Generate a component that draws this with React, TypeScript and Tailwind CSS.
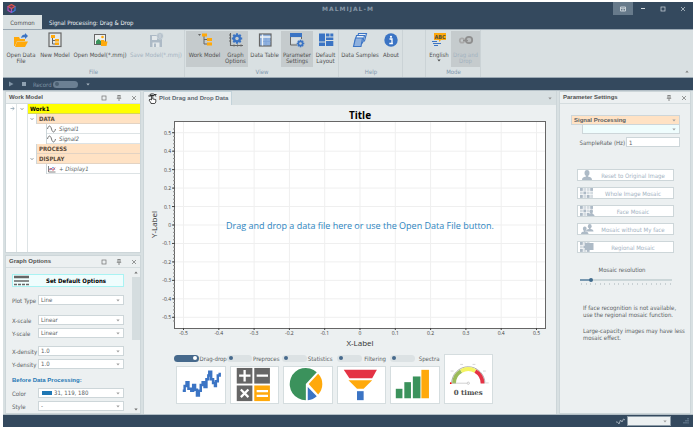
import { useState, type ReactNode } from 'react'
import clsx from 'clsx'

const BLUE = '#3b74c4'
const ORANGE = '#ffa90b'
const GRAY = '#666666'
const GREEN = '#3b925c'
const RED = '#e43345'
const MUTED = '#adbac6'

/* ---------- ribbon icons ---------- */

const OpenFileIcon = () => (
  <svg viewBox="0 0 16 16" className="size-4">
    <path d="M1 5h5l1 2h5v2H4l-2 5H1z" fill={ORANGE} />
    <path d="M4 9.500h11l-3 5.500H2z" fill={ORANGE} />
    <path d="M8 6c.5-2.500 2-3.500 4-3.500V1l3 3-3 3V5.200C10.300 5 9.200 5.300 8 6z" fill={BLUE} />
  </svg>
)

const NewModelIcon = () => (
  <svg viewBox="0 0 16 16" className="size-4">
    <rect x="2" y="1" width="12" height="13.500" fill="#e4e8e9" stroke={GRAY} strokeWidth="1.200" />
    <path d="M5.500 5v7H9M5.500 8.500H9" fill="none" stroke={GRAY} />
    <rect x="4" y="3" width="4" height="3" fill={ORANGE} />
    <rect x="8" y="7" width="4" height="2.500" fill={ORANGE} />
    <rect x="8" y="10.500" width="4" height="2.500" fill={ORANGE} />
  </svg>
)

const OpenModelIcon = () => (
  <svg viewBox="0 0 16 16" className="size-4">
    <rect x="2.500" y="2.500" width="11" height="10" fill="#eef1f1" stroke={GRAY} />
    <path d="M4 12V9l2.500-2L9 9v3z" fill={GREEN} />
    <circle cx="10.500" cy="5" r="1.300" fill={ORANGE} />
    <path d="M9 8h3l1 1.500h2.500L14.500 14H9z" fill={ORANGE} />
  </svg>
)

const SaveModelIcon = () => (
  <svg viewBox="0 0 16 16" className="size-4">
    <path d="M2 3h7v3h5v9H2z" fill={MUTED} />
    <rect x="4" y="4" width="5" height="4" fill="#e3e8ea" />
    <rect x="4.500" y="10.500" width="7" height="4.500" fill="#e3e8ea" />
    <rect x="6" y="11.500" width="2" height="3.500" fill={MUTED} />
    <circle cx="12" cy="4" r="3.200" fill={MUTED} stroke="#d9e0e2" strokeWidth=".6" />
    <path d="M10.500 3h3M10.500 5h3" stroke="#e3e8ea" strokeWidth=".8" />
  </svg>
)

const WorkModelIcon = () => (
  <svg viewBox="0 0 16 16" className="size-4">
    <path d="M1 2h3L2.500 4z" fill={GRAY} />
    <path d="M7 4v8h4M7 7.500h4" fill="none" stroke={GRAY} />
    <rect x="5" y="1.500" width="5" height="3" fill={ORANGE} />
    <rect x="10" y="6" width="5" height="3" fill={ORANGE} />
    <rect x="10" y="10.500" width="5" height="3" fill={ORANGE} />
  </svg>
)

const Gear = ({ cx, cy, r, hole }: { cx: number; cy: number; r: number; hole: string }) => (
  <g transform={`translate(${cx} ${cy})`}>
    <circle r={r * 0.78} fill={BLUE} />
    {[0, 45, 90, 135].map(a => (
      <rect key={a} x={-r * 0.2} y={-r} width={r * 0.4} height={r * 2} fill={BLUE} transform={`rotate(${a})`} />
    ))}
    <circle r={r * 0.33} fill={hole} />
  </g>
)

const GraphOptionsIcon = () => (
  <svg viewBox="0 0 16 16" className="size-4">
    <path d="M2.500 1v12.500H15M1 3h2M1 6h2M1 9h2M6 12.500v2M9.500 12.500v2M13 12.500v2" fill="none" stroke={GRAY} strokeWidth="1.100" />
    <Gear cx={9} cy={6.5} r={5.2} hole="#c6ccce" />
  </svg>
)

const DataTableIcon = () => (
  <svg viewBox="0 0 16 16" className="size-4">
    <rect x="2.500" y="2" width="11.500" height="12" fill="#8fb1de" stroke={GRAY} strokeWidth="1.200" />
    <path d="M3 5h10.500M5.500 2.500v11" stroke="#f0f4f8" strokeWidth="1.300" />
    <path d="M9 6v7.500M6 9.500h7.500" stroke="#7ba2d8" strokeWidth=".7" />
  </svg>
)

const ParameterIcon = () => (
  <svg viewBox="0 0 16 16" className="size-4">
    <rect x="1" y="1" width="12" height="4" fill={BLUE} />
    <path d="M1.500 5v8H8" fill="none" stroke={GRAY} />
    <path d="M12.500 5v2" stroke={GRAY} />
    <rect x="2" y="5.500" width="10" height="6" fill="#d9dfe2" />
    <Gear cx={11.5} cy={11.5} r={3.8} hole="#c6ccce" />
  </svg>
)

const LayoutIcon = () => (
  <svg viewBox="0 0 16 16" className="size-4">
    <g fill={BLUE}>
      <rect x="1" y="1.500" width="6" height="8" />
      <rect x="1" y="10.500" width="6" height="3.500" />
      <rect x="8" y="1.500" width="3.500" height="3" />
      <rect x="12.300" y="1.500" width="3" height="3" />
      <rect x="8" y="5.500" width="7.300" height="2.500" />
      <rect x="8" y="9" width="7.300" height="5" />
    </g>
  </svg>
)

const SamplesIcon = () => (
  <svg viewBox="0 0 16 16" className="size-4">
    <g fill="#e8eef5" stroke={BLUE} strokeWidth="1.100">
      <path d="M6.500 1.500h8l-2 7.500h-8z" />
      <path d="M4.500 3.500h8l-2 7.500h-8z" />
      <path d="M3.500 6h7L9 14.500H1.500z" fill="#8fb1de" />
    </g>
  </svg>
)

const AboutIcon = () => (
  <svg viewBox="0 0 16 16" className="size-4">
    <circle cx="8" cy="8" r="6.700" fill={BLUE} />
    <circle cx="8" cy="4.800" r="1.100" fill="#fff" />
    <path d="M6.500 7H9v4.500M6.300 11.500h3.600" fill="none" stroke="#fff" strokeWidth="1.300" />
  </svg>
)

const LanguageIcon = () => (
  <svg viewBox="0 0 16 16" className="size-4">
    <path d="M3 1h12v7h-5l-2 2V8H3z" fill={ORANGE} />
    <text x="9" y="6.800" textAnchor="middle" fontSize="5.500" fontWeight="700" fill="#56503c">ABC</text>
    <path d="M1 9.500h5M2 11.500h8M3 13.500h4" stroke={BLUE} strokeWidth="1.100" />
  </svg>
)

const DragDropIcon = () => (
  <svg viewBox="0 0 16 16" className="size-4">
    <circle cx="4" cy="8.500" r="2.200" fill="none" stroke="#a9a9a9" strokeWidth="1.800" />
    <circle cx="11" cy="8" r="3.200" fill="#b9bcbd" stroke="#8f8f8f" strokeWidth="1.800" />
    <path d="M5 8.500h5" stroke="#8f8f8f" strokeWidth="1.200" />
  </svg>
)

/* ---------- small shared pieces ---------- */

const Caret = ({ className }: { className?: string }) => (
  <svg viewBox="0 0 4 3" className={clsx('h-[3px] w-1 shrink-0', className)}>
    <path d="M.3.500h3.400L2 2.400z" fill="currentColor" />
  </svg>
)

const PinIcon = () => (
  <svg viewBox="0 0 6 6" className="size-1.5">
    <path d="M1.500.5h3M2 .5V3M4 .5V3M.8 3.300h4.400M3 3.500V6" stroke="currentColor" strokeWidth=".8" fill="none" />
  </svg>
)

const CloseIcon = () => (
  <svg viewBox="0 0 6 6" className="size-1.5">
    <path d="M1 1l4 4M5 1L1 5" stroke="currentColor" strokeWidth=".7" />
  </svg>
)

const SquareIcon = () => (
  <svg viewBox="0 0 6 6" className="size-1.5">
    <rect x="1" y="1" width="4" height="4" fill="none" stroke="currentColor" strokeWidth=".7" />
  </svg>
)

interface RibbonButtonProps {
  icon: ReactNode
  lines: string[]
  active?: boolean
  disabled?: boolean
  caret?: boolean
  className?: string
}

function RibbonButton({ icon, lines, active, disabled, caret, className }: RibbonButtonProps) {
  return (
    <button
      disabled={disabled}
      className={clsx(
        'flex h-9 flex-col items-center whitespace-nowrap pt-px',
        active && 'bg-[#c5cbcd]',
        disabled ? 'text-[#a3b2bf]' : 'text-[#505050]',
        className,
      )}
    >
      {icon}
      <span className="mt-1 flex flex-col items-center leading-[6px]">
        {lines.map(line => <span key={line}>{line}</span>)}
        {caret && <Caret className="mt-px" />}
      </span>
    </button>
  )
}

function RibbonGroup({ label, className, children }: { label?: string; className?: string; children?: ReactNode }) {
  return (
    <div className={clsx('flex flex-col border-r border-[#cbd3d6] pt-px', className)}>
      <div className="flex">{children}</div>
      <div className="flex flex-1 items-start justify-center pt-px text-[#7e97ad]">{label}</div>
    </div>
  )
}

function Panel({ title, maximize, className, children }: { title: string; maximize?: boolean; className?: string; children: ReactNode }) {
  return (
    <section className={clsx('flex flex-col border border-[#cdd6d9] bg-[#ecf0f1]', className)}>
      <header className="flex h-3 shrink-0 items-center border-b border-[#d5dddf] pr-[3px] pl-[3px] text-[#505050]">
        <h2 className="flex-1 font-['Liberation_Sans',sans-serif] font-bold">{title}</h2>
        <div className="flex gap-[9px] text-[#707070]">
          {maximize && <button aria-label={`Maximize ${title}`}><SquareIcon /></button>}
          <button aria-label={`Pin ${title}`}><PinIcon /></button>
          <button aria-label={`Close ${title}`}><CloseIcon /></button>
        </div>
      </header>
      {children}
    </section>
  )
}

interface SelectProps {
  id?: string
  label?: string
  value: string
  swatch?: boolean
  className?: string
}

function Select({ id, label, value, swatch, className }: SelectProps) {
  return (
    <div className={clsx('relative flex h-2.5 items-center border', className ?? 'border-[#cdd6d9] bg-white')}>
      {swatch && <span className="ml-[3px] h-1 w-2.5 shrink-0 bg-[#1f77b4]" />}
      <select id={id} aria-label={label} defaultValue={value} className="h-2 w-full appearance-none bg-transparent pl-0.5 leading-2 outline-none">
        <option>{value}</option>
      </select>
      <Caret className="pointer-events-none absolute right-[3px] text-[#a0a0a0]" />
    </div>
  )
}

function Field({ id, label, value, swatch }: { id: string; label: string; value: string; swatch?: boolean }) {
  return (
    <div className="grid grid-cols-[26px_1fr] items-center">
      <label htmlFor={id} className="whitespace-nowrap">{label}</label>
      <Select id={id} value={value} swatch={swatch} />
    </div>
  )
}

/* ---------- left column ---------- */

const Expander = () => (
  <svg viewBox="0 0 4 4" className="size-1">
    <path d="M.5 1L2 2.800 3.500 1" fill="none" stroke="#8b9499" strokeWidth=".8" />
  </svg>
)

const SineIcon = () => (
  <svg viewBox="0 0 9 8" className="h-2 w-[9px]">
    <path d="M.5 4C1.500 0 3.500 0 4.500 4s3 4 4 0" fill="none" stroke={GRAY} strokeWidth=".9" />
  </svg>
)

const PlotIcon = () => (
  <svg viewBox="0 0 9 8" className="h-2 w-[9px]">
    <path d="M1.500 1v6H8.500" fill="none" stroke={GRAY} strokeWidth=".8" />
    <path d="M2 5.500L4 3l2 2.500L8 2.500" fill="none" stroke={RED} strokeWidth=".8" />
    <path d="M2 3.500L4 5l2-3 2 3" fill="none" stroke={BLUE} strokeWidth=".6" />
  </svg>
)

function TreeSection({ name, open }: { name: string; open?: boolean }) {
  return (
    <li className="flex h-2.5">
      <span className="flex w-[9px] items-center justify-center border-r border-[#cdd6d9]">{open && <Expander />}</span>
      <span className="flex flex-1 items-center border-b border-[#e3d3c3] bg-[#ffe2c4] pl-0.5 font-bold text-[#5a4a3a]">{name}</span>
    </li>
  )
}

function TreeItem({ name, icon }: { name: string; icon: ReactNode }) {
  return (
    <li className="flex h-2.5 pl-[9px]">
      <span className="w-2.5 border-r border-[#cdd6d9]" />
      <span className="flex flex-1 items-center gap-[3px] border-b border-[#dde3e5] italic">{icon}{name}</span>
    </li>
  )
}

function WorkModel() {
  return (
    <Panel title="Work Model" maximize className="h-[162px]">
      <div className="flex flex-1 bg-white">
        <span className="w-[11px] border-r border-[#dde3e5] pt-0.5 pl-1">
          <svg viewBox="0 0 5 5" className="size-[5px]">
            <path d="M.5 2.500h3.500M2.500 1L4.300 2.500 2.500 4" fill="none" stroke="#8fa3b3" strokeWidth=".8" />
          </svg>
        </span>
        <span className="flex w-[11px] justify-center border-r border-[#dde3e5] pt-[3px]"><Expander /></span>
        <div className="flex-1">
          <div className="flex h-2.5 items-center border-b border-[#d6d65a] bg-[#ffff00] pl-0.5 font-bold text-black">Work1</div>
          <ul>
            <TreeSection name="DATA" open />
            <TreeItem name="Signal1" icon={<SineIcon />} />
            <TreeItem name="Signal2" icon={<SineIcon />} />
            <TreeSection name="PROCESS" />
            <TreeSection name="DISPLAY" open />
            <TreeItem name="+ Display1" icon={<PlotIcon />} />
          </ul>
        </div>
      </div>
    </Panel>
  )
}

function GraphOptions() {
  return (
    <Panel title="Graph Options" maximize className="flex-1">
      <div className="flex flex-1">
        <div className="flex flex-1 flex-col px-1.5 pt-1.5">
          <button className="flex h-[13px] items-center border border-[#a9f3f3] bg-[#effdfd] font-bold text-black">
            <svg viewBox="0 0 15 11" className="ml-px h-[11px] w-[15px]">
              <path d="M0 2h15" stroke={GRAY} strokeWidth="2.500" />
              <path d="M0 6h15" stroke={GRAY} strokeWidth="1.500" />
              <path d="M0 9.500h15" stroke={GRAY} strokeWidth="1.500" strokeDasharray="3 1" />
            </svg>
            <span className="flex-1">Set Default Options</span>
          </button>
          <div className="mt-2"><Field id="plot-type" label="Plot Type" value="Line" /></div>
          <div className="mt-2.5 flex flex-col gap-[3px]">
            <Field id="x-scale" label="X-scale" value="Linear" />
            <Field id="y-scale" label="Y-scale" value="Linear" />
          </div>
          <div className="mt-2 flex flex-col gap-[3px]">
            <Field id="x-density" label="X-density" value="1.0" />
            <Field id="y-density" label="Y-density" value="1.0" />
          </div>
          <h3 className="mt-2 font-['Liberation_Sans',sans-serif] font-bold text-[#1f77b4]">Before Data Processing:</h3>
          <div className="mt-1 flex flex-col gap-[3px]">
            <Field id="color" label="Color" value="31, 119, 180" swatch />
            <Field id="style" label="Style" value="-" />
          </div>
        </div>
        <div className="ml-0.5 flex w-2 flex-col items-center text-[#707070]">
          <Caret className="my-[3px] rotate-180" />
          <div className="h-[63px] w-full bg-[#d5dddf]" />
          <Caret className="mt-auto mb-0.5" />
        </div>
      </div>
    </Panel>
  )
}

/* ---------- plot ---------- */

const STEPS = [-5, -4, -3, -2, -1, 0, 1, 2, 3, 4, 5]
const MINOR = Array.from({ length: 53 }, (_, i) => (i - 26) / 5)
const xPos = (n: number) => `${50 + n * 9.54}%`
const yPos = (n: number) => `${50 - n * 8.96}%`
const tickLabel = (n: number) => (n === 0 ? '0' : (n / 10).toFixed(1))

function Plot() {
  return (
    <div className="flex flex-1 flex-col pr-2.5 font-['Open_Sans',sans-serif]">
      <h2 className="mt-1 ml-[30px] text-center text-[10px] leading-3 font-bold text-black">Title</h2>
      <div className="flex flex-1">
        <div className="flex w-[30px] items-center justify-start pl-1.5">
          <span className="rotate-180 text-[8px] leading-2 text-[#303030] [writing-mode:vertical-rl]">Y-Label</span>
        </div>
        <div className="relative min-h-[180px] flex-1 border border-[#666] bg-white">
          <svg className="absolute inset-0 h-full w-full overflow-visible">
            {STEPS.map(n => (
              <g key={n} stroke="#efefef">
                <line x1={xPos(n)} x2={xPos(n)} y1="0" y2="100%" />
                <line x1="0" x2="100%" y1={yPos(n)} y2={yPos(n)} />
              </g>
            ))}
            {MINOR.map(n => <line key={n} x1="-2" x2="0" y1={yPos(n)} y2={yPos(n)} stroke="#888" />)}
            {STEPS.map(n => (
              <g key={n} fill="#404040" fontSize="5">
                <line x1="-3" x2="0" y1={yPos(n)} y2={yPos(n)} stroke="#444" />
                <text x="-4" y={yPos(n)} dy="2" textAnchor="end">{tickLabel(n)}</text>
              </g>
            ))}
            {/* bottom axis hangs under the plot area */}
            <svg y="100%" className="overflow-visible" fill="#404040" fontSize="5">
              {MINOR.map(n => <line key={n} x1={xPos(n)} x2={xPos(n)} y1="0" y2="1" stroke="#666" />)}
              {STEPS.map(n => (
                <g key={n}>
                  <line x1={xPos(n)} x2={xPos(n)} y1="0" y2="2" stroke="#444" />
                  <text x={xPos(n)} y="7" textAnchor="middle">{tickLabel(n)}</text>
                </g>
              ))}
            </svg>
          </svg>
          <p className="relative flex h-full items-center justify-center text-[9px] text-[#2e86c1]">
            Drag and drop a data file here or use the Open Data File button.
          </p>
        </div>
      </div>
      <div className="mt-2.5 ml-[30px] text-center text-[8px] leading-2 text-[#303030]">X-Label</div>
    </div>
  )
}

function Switch({ label, on }: { label: string; on?: boolean }) {
  const [checked, setChecked] = useState(!!on)
  return (
    <label className="flex h-2 items-center justify-end gap-px whitespace-nowrap">
      <input type="checkbox" role="switch" checked={checked} onChange={e => setChecked(e.target.checked)} className="sr-only" />
      <span className={clsx('flex h-[7px] w-[25px] shrink-0 items-center rounded-full px-0.5', checked ? 'justify-end bg-[#46698c]' : 'bg-[#dce2e4]')}>
        <span className={clsx('size-1 rounded-full', checked ? 'bg-white' : 'bg-[#46698c]')} />
      </span>
      <span className="w-[26px] text-right">{label}</span>
    </label>
  )
}

const SignalArt = () => (
  <svg viewBox="0 0 50 38" className="h-full w-full">
    <path
      d="M6 25h2v-5h2v-4h2v7h3v2h2v-6h2v5h2v6h2v-5h2v-6h2v-3h2v5h2v-8h2v-4h1V5h2v8h2v4h2v3h1v-5h2V9h2V6"
      fill="none" stroke={BLUE} strokeWidth="2.600"
    />
  </svg>
)

const CalcArt = () => (
  <svg viewBox="0 0 50 38" className="h-full w-full">
    <rect x="6" y="1" width="16.500" height="16.500" fill={GRAY} />
    <rect x="24.500" y="1" width="16.500" height="16.500" fill={GRAY} />
    <rect x="6" y="19.500" width="16.500" height="16.500" fill={GRAY} />
    <rect x="24.500" y="19.500" width="16.500" height="16.500" fill={ORANGE} />
    <path d="M8.500 9.200h12M14.300 3.200v12M27 9.200h12M10.300 23.800l8 8M18.300 23.800l-8 8M27 25.500h12M27 30.500h12" stroke="#fff" strokeWidth="2.400" />
  </svg>
)

const PieArt = () => (
  <svg viewBox="0 0 50 38" className="h-full w-full">
    <path d="M23 18V35A17 17 0 1 1 34.500 5.500z" fill={GREEN} />
    <path d="M26 18L36 7a16 16 0 0 1 0 22z" fill={ORANGE} />
    <path d="M25 21v14c4 0 7-1.500 9.500-4z" fill={BLUE} />
  </svg>
)

const FunnelArt = () => (
  <svg viewBox="0 0 50 38" className="h-full w-full">
    <path d="M6 3h35l-5 9H12z" fill={RED} />
    <path d="M11 14h25l-9 9h-7z" fill={ORANGE} />
    <path d="M20 25.500h7V35h-7z" fill={BLUE} />
  </svg>
)

const BarsArt = () => (
  <svg viewBox="0 0 50 38" className="h-full w-full">
    <g fill={GREEN}>
      <rect x="5" y="23" width="7" height="10" />
      <rect x="14" y="16" width="7" height="17" />
      <rect x="23" y="10" width="8" height="23" />
    </g>
    <rect x="32" y="3" width="8" height="30" fill={ORANGE} />
  </svg>
)

const GaugeArt = () => (
  <svg viewBox="0 0 50 26" className="h-[26px] w-full">
    <path d="M7 25a17.500 17.500 0 0 1 35 0" fill="none" stroke="#a9a9a9" strokeWidth="1" />
    <g fill="none" strokeWidth="4">
      <path d="M9.500 25a15 15 0 0 1 7.500-13" stroke="#9bbb59" />
      <path d="M17 12a15 15 0 0 1 15 0" stroke="#f4f462" />
      <path d="M32 12A15 15 0 0 1 39.500 25" stroke={RED} />
    </g>
    <path d="M6 24.800h17" stroke="#bbb" strokeWidth=".7" />
    <circle cx="24.500" cy="24.800" r="1.200" fill="#fff" stroke="#aaa" strokeWidth=".6" />
    <circle cx="6" cy="24.800" r=".9" fill="red" />
    <path d="M6 12h3M16 5h3M29 5h3M40 12h3M43 24.500h3" stroke="#d5d5d5" />
  </svg>
)

const TOOLS = [
  { label: 'Drag-drop', art: <SignalArt />, on: true },
  { label: 'Preproces', art: <CalcArt /> },
  { label: 'Statistics', art: <PieArt /> },
  { label: 'Filtering', art: <FunnelArt /> },
  { label: 'Spectra', art: <BarsArt /> },
]

function ToolStrip() {
  return (
    <div className="mt-[7px] mb-2.5 ml-8 grid w-[317px] grid-cols-6 gap-1">
      {TOOLS.map(tool => (
        <div key={tool.label} className="flex flex-col gap-1">
          <Switch label={tool.label} on={tool.on} />
          <button aria-label={tool.label} className="h-[38px] border border-[#d5dddf] bg-white">{tool.art}</button>
        </div>
      ))}
      <div className="flex flex-col items-center border border-[#d5dddf] bg-white pt-1">
        <GaugeArt />
        <span className="mt-1 font-['DejaVu_Serif',serif] text-[7px] leading-2 font-bold text-[#505050]">0 times</span>
      </div>
    </div>
  )
}

function PlotPanel() {
  return (
    <main className="flex min-w-0 flex-1 flex-col border-x border-[#cdd6d9]">
      <div className="flex h-3.5 items-center justify-between bg-[#d8e0e2]">
        <button className="flex h-full items-center gap-0.5 border-t border-r border-[#c3d3da] bg-[#ecf0f1] pr-[3px] pl-1 font-['Liberation_Sans',sans-serif] font-bold text-[#5c6770]">
          <svg viewBox="0 0 9 11" className="h-[11px] w-[9px]">
            <path d="M3 10L1 7l1-1 1.500 1V2.500h1.300V6l3 .5V9l-1 1.500H3z" fill="#fff" stroke="#222" strokeWidth=".8" />
            <path d="M.8 3.500C1 0 7.500 0 7.800 3.500M2 4V2.500h4.500M6 1.500h2.500" fill="none" stroke="#222" strokeWidth=".9" />
          </svg>
          Plot Drag and Drop Data
        </button>
        <Caret className="mr-1 text-[#909090]" />
      </div>
      <div className="flex flex-1 flex-col bg-[#ecf0f1]">
        <Plot />
        <ToolStrip />
      </div>
    </main>
  )
}

/* ---------- right column ---------- */

const Person = ({ x = 0, y = 0, s = 1 }: { x?: number; y?: number; s?: number }) => (
  <g transform={`translate(${x} ${y}) scale(${s})`} fill={MUTED}>
    <ellipse cx="5" cy="3" rx="2.500" ry="3" />
    <path d="M0 10c0-2.500 1.500-3 4-3.500V5h2v1.500c2.500.5 4 1 4 3.500z" />
  </g>
)

function Mosaic({ cols = 4 }: { cols?: number }) {
  return (
    <>
      {[0, 1, 2].map(row =>
        Array.from({ length: cols }, (_, col) => (
          <rect key={`${row}-${col}`} x={1 + col * 3.4} y={row * 3.5} width="2.800" height="2.900" fill={(row * 3 + col * 2) % 5 < 2 ? MUTED : '#d5dce1'} />
        )),
      )}
    </>
  )
}

const MOSAIC_ACTIONS = [
  { label: 'Reset to Original Image', icon: <Person x={3} /> },
  { label: 'Whole Image Mosaic', icon: <Mosaic /> },
  { label: 'Face Mosaic', icon: <><Mosaic /><Person x={9} y={3.500} s={0.65} /></> },
  { label: 'Mosaic without My face', icon: <><Person x={7} s={0.75} /><Person x={2} y={2.500} s={0.75} /></> },
  { label: 'Regional Mosaic', icon: <><Mosaic cols={3} /><rect x="6" y="1" width="8.500" height="7" fill={MUTED} /></> },
]

function ParameterSettings() {
  return (
    <Panel title="Parameter Settings" className="w-[132px]">
      <div className="flex flex-col pt-[11px] pr-2.5 pl-[11px]">
        <Select label="Category" value="Signal Processing" className="border-[#cdd6d9] bg-[#ffe2c4] font-['Liberation_Sans',sans-serif] font-bold" />
        <div className="-mt-px pl-[11px]">
          <Select label="Process" value="" className="border-[#cdd6d9] bg-[#effdfd]" />
        </div>
        <div className="mt-[3px] flex items-center justify-end gap-px">
          <label htmlFor="sample-rate" className="whitespace-nowrap">SampleRate (Hz)</label>
          <input id="sample-rate" defaultValue="1" className="h-2.5 w-[54px] border border-[#cdd6d9] bg-white px-0.5 outline-none" />
        </div>
      </div>
      <div className="mt-[22px] flex flex-col gap-1.5 pr-4 pl-[17px]">
        {MOSAIC_ACTIONS.map(action => (
          <button key={action.label} disabled className="flex h-3 items-center border border-[#cdd6d9] bg-white text-[#a3b2bf]">
            <svg viewBox="0 0 16 10" className="ml-px h-2.5 w-4">{action.icon}</svg>
            <span className="flex-1 pr-0.5">{action.label}</span>
          </button>
        ))}
      </div>
      <div className="mt-[13px] flex flex-col pr-[18px] pl-5">
        <label htmlFor="mosaic-resolution" className="pr-2 text-center">Mosaic resolution</label>
        <input
          id="mosaic-resolution"
          type="range"
          min="0"
          max="19"
          defaultValue="2"
          className="mt-[5px] h-1 w-full appearance-none bg-transparent [&::-webkit-slider-runnable-track]:h-0.5 [&::-webkit-slider-runnable-track]:bg-linear-to-r [&::-webkit-slider-runnable-track]:from-[#7898b0] [&::-webkit-slider-runnable-track]:from-12% [&::-webkit-slider-runnable-track]:to-[#cbd6d8] [&::-webkit-slider-runnable-track]:to-12% [&::-webkit-slider-thumb]:-mt-px [&::-webkit-slider-thumb]:size-1 [&::-webkit-slider-thumb]:appearance-none [&::-webkit-slider-thumb]:rounded-full [&::-webkit-slider-thumb]:bg-[#3f6a8c]"
        />
        <div className="mt-px flex justify-between px-px">
          {Array.from({ length: 20 }, (_, i) => <span key={i} className="h-0.5 w-px bg-[#c9d1d4]" />)}
        </div>
      </div>
      <div className="mt-[19px] flex flex-col gap-[9px] pl-[23px] whitespace-nowrap">
        <p>If face recognition is not available,<br />use the regional mosaic function.</p>
        <p>Large-capacity images may have less<br />mosaic effect.</p>
      </div>
    </Panel>
  )
}

/* ---------- window ---------- */

function TitleBar() {
  return (
    <header className="bg-[#34495e]">
      <div className="grid h-[13px] grid-cols-[1fr_auto_1fr] items-center">
        <svg viewBox="0 0 9 9" className="ml-1 size-[9px]">
          <path d="M4.500.5L8 2.500 4.500 4.500 1 2.500z" fill="#6b3a5e" stroke="#e2574c" strokeWidth="1.200" />
          <path d="M1 2.500v4l3.500 2v-4" fill="none" stroke="#b04fc0" strokeWidth="1.200" />
          <path d="M8 2.500v4l-3.500 2" fill="none" stroke="#3d7be0" strokeWidth="1.200" />
        </svg>
        <h1 className="font-['DejaVu_Sans',sans-serif] font-bold tracking-[1px] text-[#8797a6]">MALMIJAL-M</h1>
        <div className="flex justify-end text-[#d0d8de]">
          <button aria-label="Ribbon display" className="flex h-[13px] w-5 items-center justify-center bg-[#677a8b]">
            <svg viewBox="0 0 6 6" className="size-1.5">
              <path d="M.5 1h5v4h-5zM.5 2.300h5M3 5V3" fill="none" stroke="currentColor" strokeWidth=".9" />
            </svg>
          </button>
          <button aria-label="Minimize" className="flex h-[13px] w-5 items-center justify-center"><span className="h-px w-1 bg-current" /></button>
          <button aria-label="Maximize" className="flex h-[13px] w-5 items-center justify-center"><SquareIcon /></button>
          <button aria-label="Close" className="flex h-[13px] w-5 items-center justify-center"><CloseIcon /></button>
        </div>
      </div>
      <nav className="flex h-3.5">
        <button className="w-[39px] bg-[#d9e0e2] text-[#505050]">Common</button>
        <button className="px-[7px] text-[#eef2f5]">Signal Processing: Drag &amp; Drop</button>
      </nav>
    </header>
  )
}

function Ribbon() {
  return (
    <div className="flex h-[49px] border-y border-[#9aa8b3] bg-[#d9e0e2]">
      <RibbonGroup label="File" className="w-[182px]">
        <RibbonButton icon={<OpenFileIcon />} lines={['Open Data', 'File']} className="w-9" />
        <RibbonButton icon={<NewModelIcon />} lines={['New Model']} className="w-8" />
        <RibbonButton icon={<OpenModelIcon />} lines={['Open Model(*.mmj)']} className="w-[58px]" />
        <RibbonButton icon={<SaveModelIcon />} lines={['Save Model(*.mmj)']} disabled className="w-[54px]" />
      </RibbonGroup>
      <RibbonGroup label="View" className="w-[154px] pl-px">
        <RibbonButton icon={<WorkModelIcon />} lines={['Work Model']} active className="w-[37px]" />
        <RibbonButton icon={<GraphOptionsIcon />} lines={['Graph', 'Options']} active className="w-[25px]" />
        <RibbonButton icon={<DataTableIcon />} lines={['Data Table']} className="w-[33px]" />
        <RibbonButton icon={<ParameterIcon />} lines={['Parameter', 'Settings']} active className="w-8" />
        <RibbonButton icon={<LayoutIcon />} lines={['Default', 'Layout']} className="w-[25px]" />
      </RibbonGroup>
      <RibbonGroup label="Help" className="w-16 pl-px">
        <RibbonButton icon={<SamplesIcon />} lines={['Data Samples']} className="w-10" />
        <RibbonButton icon={<AboutIcon />} lines={['About']} className="w-[22px]" />
      </RibbonGroup>
      <RibbonGroup className="w-[23px]" />
      <RibbonGroup label="Mode" className="w-[55px] pl-px">
        <RibbonButton icon={<LanguageIcon />} lines={['English']} caret className="w-6" />
        <RibbonButton icon={<DragDropIcon />} lines={['Drag and', 'Drop']} active disabled className="w-[29px]" />
      </RibbonGroup>
      <button aria-label="Collapse ribbon" className="mt-auto mr-1 mb-1 ml-auto text-[#808080]"><Caret className="rotate-180" /></button>
    </div>
  )
}

export default function App() {
  return (
    <div className="flex min-h-screen flex-col bg-white px-[3px] py-0.5 font-['DejaVu_Sans_Condensed','DejaVu_Sans',sans-serif] text-[6px] leading-[7px] text-[#5a5f63]">
      <TitleBar />
      <Ribbon />
      <div className="flex h-3 shrink-0 items-center bg-[#34495e] pl-[5px] text-[#7f93a5]">
        <button aria-label="Play" className="w-2"><svg viewBox="0 0 6 6" className="size-1.5"><path d="M1 .5L5.500 3 1 5.500z" fill="currentColor" /></svg></button>
        <button aria-label="Stop" className="ml-1.5 size-1 bg-[#8fa1b1]" />
        <label className="ml-[7px] flex items-center gap-px">
          Record
          <input type="checkbox" role="switch" className="sr-only" />
          <span className="flex h-[7px] w-[25px] items-center rounded-full bg-[#6c8093] px-0.5"><span className="size-1 rounded-full bg-[#4b5f72]" /></span>
        </label>
        <Caret className="ml-2 text-[#a9b6c1]" />
      </div>
      <div className="flex flex-1 gap-0.5 border-y border-[#b3bfc6] bg-[#d8e0e2] px-0.5">
        <div className="flex w-[136px] flex-col gap-0.5">
          <WorkModel />
          <GraphOptions />
        </div>
        <PlotPanel />
        <ParameterSettings />
      </div>
      <footer className="flex h-3 shrink-0 items-center justify-end bg-[#34495e] text-[#a9b6c1]">
        <svg viewBox="0 0 9 7" className="mr-0.5 h-[7px] w-[9px]">
          <path d="M0 4h1.500L3 6l1.500-4L6 4l1.500-3L9 2" fill="none" stroke="currentColor" strokeWidth=".9" />
        </svg>
        <div className="w-11"><Select label="Zoom" value="" className="border-[#8d9ca8] bg-[#ecf0f1]" /></div>
        <svg viewBox="0 0 6 6" className="mr-1 ml-3 size-1.5">
          <path d="M5 0v6M3 2v4M1 4v2" stroke="#71859a" strokeWidth="1.200" strokeDasharray="1.200 .6" />
        </svg>
      </footer>
    </div>
  )
}
